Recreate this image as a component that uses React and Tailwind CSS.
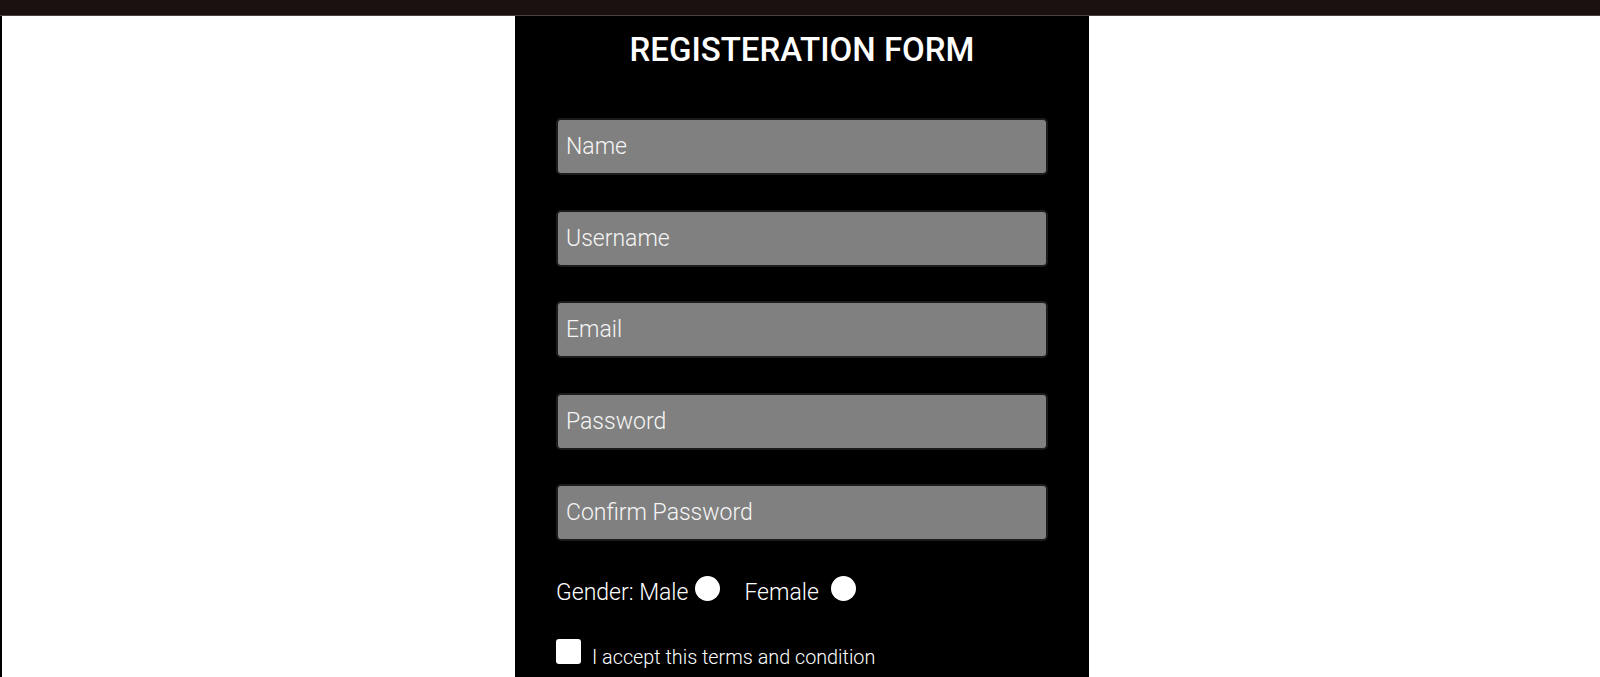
import React from 'react';

const fields = ['Name', 'Username', 'Email', 'Password', 'Confirm Password'];

const App = () => {
  return (
    <div className="min-h-screen bg-white flex flex-col font-['Roboto',sans-serif]">
      <div className="h-[16px] bg-[#1b1110] border-b border-[#4b4341]" />
      <div className="flex flex-1 justify-center border-l-2 border-black">
        <form className="ml-[2px] w-[574px] bg-black px-[41px] pt-[14px] pb-10">
          <h1 className="text-center text-white text-[33px] leading-[40px] font-medium">
            REGISTERATION FORM
          </h1>

          <div className="mt-[48px] flex flex-col gap-[34.5px]">
            {fields.map((f) => (
              <input
                key={f}
                type={f.includes('Password') ? 'password' : 'text'}
                placeholder={f}
                className="h-[57px] w-full rounded-[5px] border-2 border-[#1c1c1c] bg-[#808080] pl-[8px] text-[23px] font-light text-white placeholder:text-[#f5f5f5] outline-none"
              />
            ))}

            <div className="flex items-start text-white text-[23px] font-light">
              <span className="mt-[2px] leading-[30px]">Gender: Male</span>
              <input
                type="radio"
                name="gender"
                className="ml-[7px] h-[25px] w-[25px] appearance-none rounded-full bg-white"
              />
              <span className="ml-[24px] mt-[2px] leading-[30px]">Female</span>
              <input
                type="radio"
                name="gender"
                className="ml-[12px] h-[25px] w-[25px] appearance-none rounded-full bg-white"
              />
            </div>
          </div>

          <label className="mt-[31.5px] flex items-start text-white text-[19.8px] font-light">
            <input
              type="checkbox"
              className="h-[25px] w-[25px] appearance-none rounded-[3px] bg-white"
            />
            <span className="ml-[11px] mt-[7px] leading-[24px]">I accept this terms and condition</span>
          </label>
        </form>
      </div>
    </div>
  );
};

export default App;
